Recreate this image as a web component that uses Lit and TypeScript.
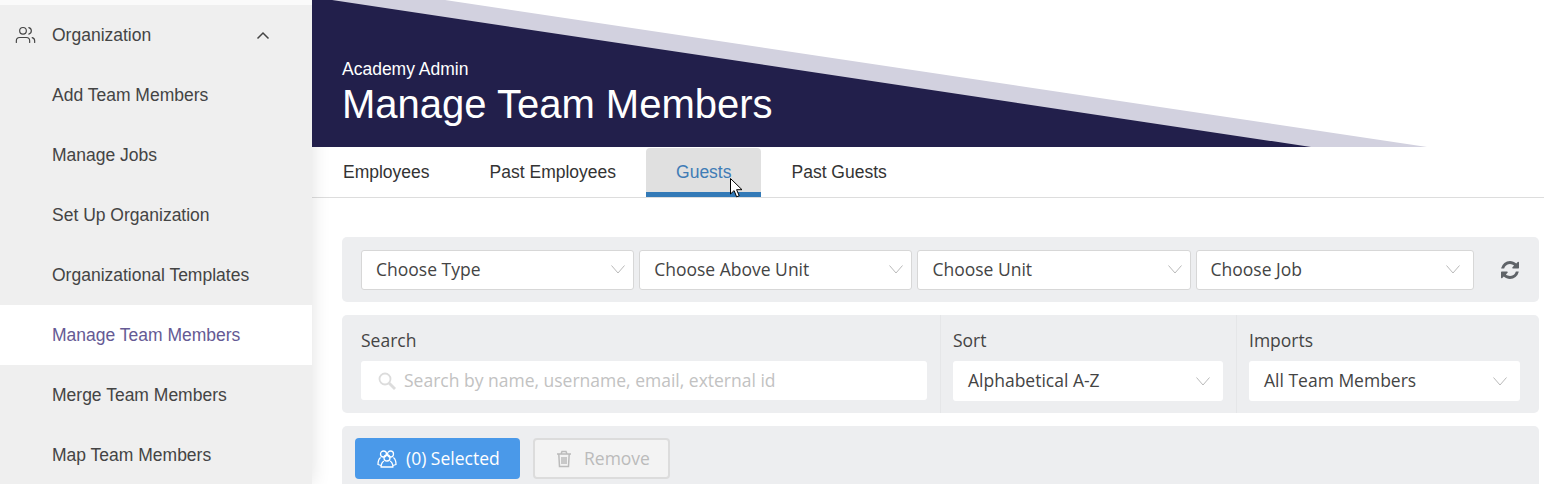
import { LitElement, html, css } from "lit";
import { customElement } from "lit/decorators.js";

const chevron = html`<svg class="chev" width="14" height="9" viewBox="0 0 14 9"><path d="M.5.5 7 8 13.5.5" fill="none" stroke="#b9b9b9" stroke-width="1"/></svg>`;

@customElement("app-root")
export class AppRoot extends LitElement {
  static styles = css`
    :host { display: block; width: 1544px; height: 484px; overflow: hidden; background: #fff; font-family: "Liberation Sans", Arial, sans-serif; }
    * { box-sizing: border-box; }
    .page { display: flex; height: 484px; }
    .side { width: 312px; flex: none; background: #fafafa; padding-top: 5px; box-shadow: 0 0 18px rgba(0,0,0,.12); position: relative; z-index: 1; }
    .nav { background: #efefef; }
    .row { height: 60px; display: flex; align-items: center; padding-left: 52px; font-size: 17.5px; color: #444; }
    .row.top { position: relative; }
    .row.active { background: #fff; color: #655a94; }
    .org-icon { position: absolute; left: 15px; top: 20px; }
    .org-chev { position: absolute; left: 256px; top: 26px; }
    .main { flex: 1; min-width: 0; }
    .hero { height: 147px; background: #221f4b; position: relative; z-index: 2; padding: 60px 0 0 30px; color: #fff; overflow: hidden; }
    .hero svg { position: absolute; left: 0; top: 0; }
    .eyebrow, .title { position: relative; }
    .eyebrow { font-size: 17.5px; line-height: 18px; }
    .title { font-size: 40px; line-height: 44px; margin-top: 4px; }
    .tabs { height: 51px; display: flex; border-bottom: 1px solid #ddd; padding: 1px 0 0 1px; position: relative; font-size: 17.5px; color: #333; }
    .tab { padding: 0 30px; display: flex; align-items: center; height: 49px; padding-bottom: 1px; border-radius: 4px 4px 0 0; }
    .tab.on { background: #e0e0e0; color: #3f7cb6; border-bottom: 5px solid #337ab7; padding-top: 4px; padding-bottom: 0; }
    .cursor { position: absolute; left: 418px; top: 31px; }
    .content { padding: 39px 5px 0 30px; font-family: "Open Sans", sans-serif; color: #444; font-size: 17.5px; display: flex; flex-direction: column; gap: 13px; }
    .panel { background: #edeef0; border-radius: 5px; }
    .filters { height: 65px; display: flex; align-items: center; padding: 0 0 0 19px; gap: 5px; }
    .sel { height: 40px; background: #fff; border: 1px solid #d7d7d7; border-radius: 3px; display: flex; align-items: center; justify-content: space-between; padding: 0 8px 0 14px; width: 273.2px; flex: none; }
    .sel span, .field span, .btn span { margin-bottom: 2px; }
    .sel.job { width: 278px; padding-right: 13px; }
    .refresh { margin-left: 22px; display: flex; }
    .search { height: 98px; display: flex; }
    .col { padding: 13px 13px 0 12px; border-left: 1px solid #e5e6e8; display: flex; flex-direction: column; gap: 10px; }
    .col label { line-height: 24px; height: 23px; }
    .col.s { width: 598px; border-left: 0; padding-left: 19px; }
    .col.o { width: 296px; }
    .col.i { flex: 1; padding-right: 19px; }
    .field { height: 40px; background: #fff; border-radius: 3px; display: flex; align-items: center; justify-content: space-between; padding: 0 13px 0 15px; }
    .col.s .field { height: 39px; justify-content: flex-start; gap: 8px; padding-left: 17px; color: #c2c2c2; }
    .actions { height: 70px; display: flex; padding: 12px 13px; gap: 13px; }
    .btn { height: 41px; border-radius: 4px; display: flex; align-items: center; font-size: 17.5px; }
    .btn.sel-btn { width: 165px; background: #4a99e9; color: #fff; padding-left: 22px; gap: 9px; }
    .btn.rm { width: 137px; background: #f3f3f3; border: 2px solid #dcdcdc; color: #bbb; padding-left: 21px; gap: 12px; }
  `;

  render() {
    const items = ["Add Team Members", "Manage Jobs", "Set Up Organization", "Organizational Templates", "Manage Team Members", "Merge Team Members", "Map Team Members"];
    return html`<div class="page">
      <aside class="side"><div class="nav">
        <div class="row top">
          <svg class="org-icon" width="21" height="20" viewBox="0 0 24 24" fill="none" stroke="#444" stroke-width="1.4" stroke-linecap="round" stroke-linejoin="round"><path d="M17 21v-2a4 4 0 0 0-4-4H5a4 4 0 0 0-4 4v2"/><circle cx="9" cy="7" r="4"/><path d="M23 21v-2a4 4 0 0 0-3-3.87"/><path d="M16 3.13a4 4 0 0 1 0 7.75"/></svg>
          Organization
          <svg class="org-chev" width="14" height="9" viewBox="0 0 14 9" fill="none" stroke="#444" stroke-width="1.5"><path d="M1.5 7.5 7 2l5.5 5.5"/></svg>
        </div>
        ${items.map((t) => html`<div class="row ${t === "Manage Team Members" ? "active" : ""}">${t}</div>`)}
      </div></aside>
      <main class="main">
        <div class="hero">
          <svg width="1232" height="147" viewBox="0 0 1232 147">
            <polygon points="20,0 1232,0 1232,147 999,147" fill="#d2d1df"/>
            <polygon points="133,0 1232,0 1232,147 1115,147" fill="#fff"/>
          </svg>
          <div class="eyebrow">Academy Admin</div>
          <div class="title">Manage Team Members</div>
        </div>
        <div class="tabs">
          <div class="tab">Employees</div>
          <div class="tab">Past Employees</div>
          <div class="tab on">Guests</div>
          <div class="tab">Past Guests</div>
          <svg class="cursor" width="14" height="20" viewBox="0 0 14 20"><path d="M.5.5v15.500l3.600-3.400 2.500 6.200 2.600-1.100-2.600-6H12z" fill="#fff" stroke="#000" stroke-width="1"/></svg>
        </div>
        <div class="content">
          <section class="panel filters">
            <div class="sel"><span>Choose Type</span>${chevron}</div>
            <div class="sel"><span>Choose Above Unit</span>${chevron}</div>
            <div class="sel"><span>Choose Unit</span>${chevron}</div>
            <div class="sel job"><span>Choose Job</span>${chevron}</div>
            <span class="refresh"><svg width="18" height="18" viewBox="0 0 1536 1536"><path fill="#5f6368" d="M1511 928q0 5-1 7-64 268-268 434.5t-478 166.5q-146 0-282.5-55t-243.5-157l-129 129q-19 19-45 19t-45-19-19-45v-448q0-26 19-45t45-19h448q26 0 45 19t19 45-19 45l-137 137q71 66 161 102t187 36q134 0 250-65t186-179q11-17 53-117 8-23 30-23h192q13 0 22.5 9.5t9.5 22.5zm25-800v448q0 26-19 45t-45 19h-448q-26 0-45-19t-19-45 19-45l138-138q-148-137-349-137-134 0-250 65t-186 179q-11 17-53 117-8 23-30 23h-199q-13 0-22.5-9.5t-9.5-22.5v-7q65-268 270-434.5t480-166.5q146 0 284 55.5t245 156.5l130-129q19-19 45-19t45 19 19 45z"/></svg></span>
          </section>
          <section class="panel search">
            <div class="col s"><label>Search</label><div class="field">
              <svg width="18" height="18" viewBox="0 0 18 18" fill="none" stroke="#dcdcdc"><circle cx="7" cy="7" r="5.500" stroke-width="1.800"/><path d="m11 11 6 6" stroke-width="2.800"/></svg>
              <span>Search by name, username, email, external id</span>
            </div></div>
            <div class="col o"><label>Sort</label><div class="field"><span>Alphabetical A-Z</span>${chevron}</div></div>
            <div class="col i"><label>Imports</label><div class="field"><span>All Team Members</span>${chevron}</div></div>
          </section>
          <section class="panel actions">
            <div class="btn sel-btn">
              <svg width="20" height="19" viewBox="0 0 20 19" fill="none" stroke="#fff" stroke-width="1.3" stroke-linejoin="round"><circle cx="6.5" cy="5" r="3"/><circle cx="13.5" cy="5" r="3"/><path d="M3.600 8.500C1.500 10 1 13 1 15.500l3 1M16.400 8.500c2.100 1.500 2.600 4.500 2.600 7l-3 1"/><circle cx="10" cy="9" r="3"/><path d="M7 12c-2 1-2.800 3.500-3 6h12c-.2-2.500-1-5-3-6"/></svg>
              <span>(0) Selected</span>
            </div>
            <div class="btn rm">
              <svg width="16" height="18" viewBox="0 0 16 18" fill="none" stroke="#bbb" stroke-width="1.500"><path d="M1 4h14M5 4l1-2.500h4L11 4M2.800 4l.7 12.500h9L13.200 4M6 7v7M8 7v7M10 7v7"/></svg>
              <span>Remove</span>
            </div>
          </section>
        </div>
      </main>
    </div>`;
  }
}
